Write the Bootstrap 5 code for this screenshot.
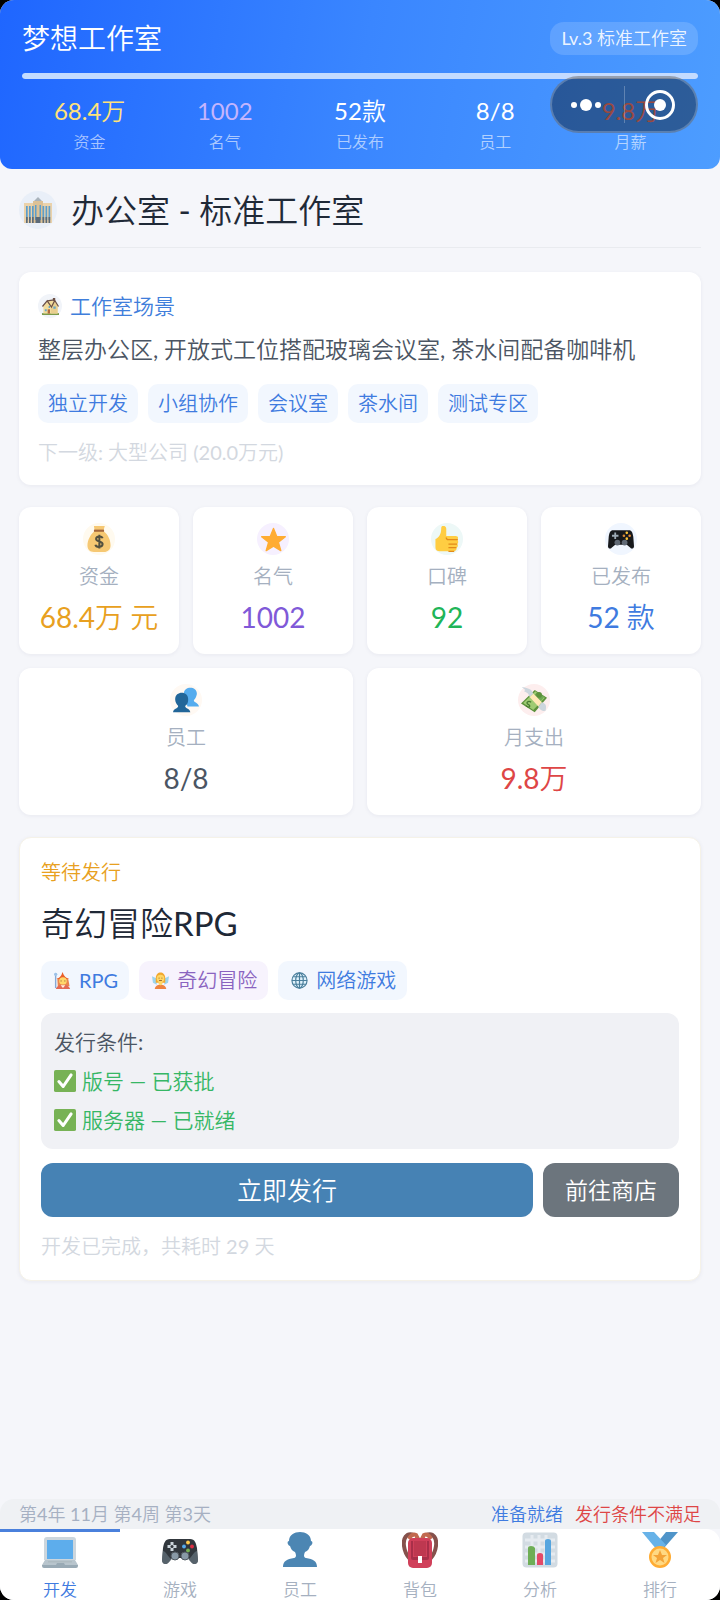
<!DOCTYPE html>
<html lang="zh-CN" class="h-100">
<head>
<meta charset="utf-8">
<meta name="viewport" content="width=device-width, initial-scale=1">
<title>梦想工作室</title>
<link href="https://cdn.jsdelivr.net/npm/bootstrap@5.3.0/dist/css/bootstrap.min.css" rel="stylesheet">
<style>
body{background:#000;font-family:Lato,"Noto Sans CJK SC DemiLight","Noto Sans CJK SC",sans-serif;font-weight:400;font-size:20px;line-height:26px;color:#1f2937}
.app{background:#f5f6fa;border-radius:14px}
svg{display:block}
a{text-decoration:none}
.hero{background:linear-gradient(100deg,#1f66ff,#3a86ff 50%,#4d9dff);border-radius:0 0 12px 12px;padding:22px 22px 16px;color:#fff}
.studio{font-size:28px;line-height:33px}
.level{background:rgba(255,255,255,.15);border-radius:14px;font-size:18px;line-height:33px;padding:0 11px;color:rgba(255,255,255,.9)}
.hero .progress{height:6px;margin:18px 0;background:rgba(255,255,255,.2);border-radius:3px}
.hero .progress-bar{background:#c3dbff;border-radius:3px}
.num{font-size:24px;line-height:28px}
.cap{font-size:16px;line-height:22px;margin-top:6px;color:rgba(255,255,255,.6)}
.gold{color:#ffe27a}.lilac{color:#c4b5fd}.rose{color:#ff7b6b}
.capsule{top:76px;right:22px;width:148px;height:57px;border-radius:29px;background:rgba(0,0,0,.4);border:2px solid rgba(255,255,255,.22)}
.capsule button{background:none;border:0;padding:0;height:100%}
.capsule button+button{position:relative}
.capsule button+button::before{content:"";position:absolute;left:0;top:8px;bottom:8px;width:1px;background:rgba(255,255,255,.25)}
main{padding:22px 19px}
.pagehead{padding-bottom:18px;border-bottom:1px solid #e9ebef;margin-bottom:24px;gap:14px}
.pagehead h1{font-size:33px;line-height:38px;font-weight:400;margin:0}
.disc{border-radius:50%;display:flex;align-items:center;justify-content:center;flex:none}
.d38{width:38px;height:38px;background:#e9eff8}
.d24{width:24px;height:24px;background:#f1f4f9}
.d32{width:32px;height:32px}
.panel{background:#fff;border-radius:12px;box-shadow:0 1px 4px rgba(30,40,80,.06)}
.scene{padding:22px 19px 20px}
.scene h2{font-size:21px;line-height:24px;font-weight:400;margin:0;color:#3f7edb}
.desc{font-size:23px;line-height:34px;margin:14px 0 18px;color:#4b5563}
.pills{gap:10px}
.pill{background:#f2f7fe;color:#3f7be0;border-radius:10px;line-height:39px;padding:0 10px}
.pill.ic{padding:0 11px 0 13px;display:flex;align-items:center;gap:8px}
.pill.violet{background:#f7f3fd;color:#8a63c0}
.faint{color:#d3d8e0;margin-top:16px}
.tiles{display:grid;grid-template-columns:repeat(4,1fr);gap:14px;margin:22px 0}
.tile{padding:16px 4px 19px;display:flex;flex-direction:column;align-items:center}
.wide{grid-column:span 2}
.tlabel{line-height:28px;margin-top:7px;color:#a5b0c0}
.tvalue{font-size:28px;line-height:36px;margin-top:9px}
.project{border:1px solid #f5f2e8;padding:21px}
.project h2{font-size:33px;line-height:44px;font-weight:400;margin:16px 0}
.amber{color:#e8a020}
.conds{background:#f0f1f5;border-radius:12px;padding:9px 13px 10px;margin:13px 0 14px;font-size:21px;line-height:39px;color:#4b5563}
.ok{color:#36b765;gap:6px}
.act{height:54px;border:0;border-radius:12px;color:#fff;padding:0 20px}
.go{background:#4682b4;font-size:25px}
.shop{background:#6c757d;font-size:23px;width:136px;white-space:nowrap}
.status{background:#eff1f4;border-radius:14px 14px 0 0;padding:1px 19px 0;font-size:18px;line-height:29px;color:#a6b0c2}
.tabs{background:#fff;border-radius:0 14px 0 0}
.tabs a{flex:1 1 0;border-top:3px solid transparent;display:flex;flex-direction:column;align-items:center;font-size:17px;line-height:20px;color:#a5b0c0;gap:12px}
.tabs a.on{border-color:#4a80dc;color:#3f7be0}
</style>
<script src="https://cdn.jsdelivr.net/npm/bootstrap@5.3.0/dist/js/bootstrap.bundle.min.js"></script>
</head>
<body class="h-100">
<div class="app d-flex flex-column min-vh-100 position-relative overflow-hidden">
<header class="hero">
  <div class="d-flex justify-content-between">
    <div class="studio">梦想工作室</div>
    <div class="level">Lv.3 标准工作室</div>
  </div>
  <div class="progress" role="progressbar" aria-label="等级进度" aria-valuenow="100" aria-valuemin="0" aria-valuemax="100"><div class="progress-bar w-100"></div></div>
  <div class="row g-0 text-center">
    <div class="col"><div class="num gold">68.4万</div><div class="cap">资金</div></div>
    <div class="col"><div class="num lilac">1002</div><div class="cap">名气</div></div>
    <div class="col"><div class="num">52款</div><div class="cap">已发布</div></div>
    <div class="col"><div class="num">8/8</div><div class="cap">员工</div></div>
    <div class="col"><div class="num rose">9.8万</div><div class="cap">月薪</div></div>
  </div>
</header>
<div class="capsule position-absolute d-flex">
  <button class="w-50" type="button" aria-label="更多"><svg class="mx-auto" width="34" height="14" viewBox="0 0 34 14" fill="#fff"><circle cx="3" cy="7" r="3"/><circle cx="15" cy="7" r="6"/><circle cx="27" cy="7" r="3"/></svg></button>
  <button class="w-50" type="button" aria-label="关闭"><svg class="mx-auto" width="32" height="32" viewBox="0 0 32 32"><circle cx="16" cy="16" r="13.5" fill="none" stroke="#fff" stroke-width="3"/><circle cx="16" cy="16" r="6" fill="#fff"/></svg></button>
</div>

<main class="flex-grow-1">
  <div class="pagehead d-flex align-items-center">
    <span class="disc d38"><svg width="28" height="28" viewBox="0 0 28 28"><path fill="#a9b3bb" d="M10 5l4-4 4 4v3h-8z"/><path fill="#ead2ab" d="M0 7h28v20H0z"/><path fill="#dcc196" d="M9 5h10v22H9z"/><path fill="#5c9ecb" d="M2 10h1.700v14H2zM5 10h1.700v14H5zM8 10h1.700v14H8zM11 9h1.500v15H11zM15.500 9H17v15h-1.500zM18.500 10h1.700v14h-1.700zM21.500 10h1.700v14h-1.700zM24.500 10h1.700v14h-1.700z"/><path fill="#5b6a78" d="M2 21h1.700v6H2zM5 21h1.700v6H5zM8 21h1.700v6H8zM11.500 21h5v6h-5zM18.500 21h1.700v6h-1.700zM21.500 21h1.700v6h-1.700zM24.500 21h1.700v6h-1.700z"/></svg></span>
    <h1>办公室 - 标准工作室</h1>
  </div>

  <section class="panel scene">
    <div class="d-flex align-items-center gap-2">
      <span class="disc d24"><svg width="17" height="17" viewBox="0 0 36 36"><path fill="#7c9b4b" d="M0 32h36v4H0z"/><path fill="#f2dc9c" d="M3 18L12 7l15-2 6 12v16H3z"/><path fill="#e9cf8f" d="M19 17L27 6l6 11v16H19z"/><path fill="none" stroke="#6b4f45" stroke-width="2.500" d="M1 18L11 6l9 13 7-14 8 13M11 6l15-2"/><path fill="#6b4f45" d="M23 0h5v6h-5z"/><path fill="#66a6c5" d="M24 18h5v5h-5zM6 24h4v4H6zM14 17h3v4h-3z"/><path fill="#b06a3d" d="M12 24h5v9h-5z"/></svg></span>
      <h2>工作室场景</h2>
    </div>
    <p class="desc">整层办公区, 开放式工位搭配玻璃会议室, 茶水间配备咖啡机</p>
    <div class="pills d-flex flex-wrap">
      <span class="pill">独立开发</span><span class="pill">小组协作</span><span class="pill">会议室</span><span class="pill">茶水间</span><span class="pill">测试专区</span>
    </div>
    <div class="faint">下一级: 大型公司 (20.0万元)</div>
  </section>

  <section class="tiles">
    <div class="panel tile"><span class="disc d32" style="background:#fffaef"><svg width="26" height="26" viewBox="0 0 36 36"><path fill="#f6c873" d="M11 0h15l-2 7c7 5 10 13 10 20 0 6-4 9-9 9H11c-6 0-9-4-9-9 0-7 4-15 10-20z"/><path fill="#a4663b" d="M11 5h14v3H11z"/><path d="M23 17c-1-3-9-4-9 1 0 4 9 3 9 7 0 5-9 5-10 1M18.500 12v19" fill="none" stroke="#53503f" stroke-width="2.800"/></svg></span><div class="tlabel">资金</div><div class="tvalue amber">68.4万 元</div></div>
    <div class="panel tile"><span class="disc d32" style="background:#f6f0ff"><svg width="25" height="25" viewBox="0 0 36 36"><path fill="#ffac33" stroke="#ffac33" stroke-width="2" stroke-linejoin="round" d="M18 2l4.500 11.500L35 14l-10 8 3.500 12L18 27.500 7.500 34 11 22 1 14l12.500-.5z"/></svg></span><div class="tlabel">名气</div><div class="tvalue" style="color:#8059d8">1002</div></div>
    <div class="panel tile"><span class="disc d32" style="background:#edf8f7"><svg width="26" height="26" viewBox="0 0 36 36"><path fill="#ffcd42" d="M2 18c5-2 8-7 8-15 0-5 7-4 7 1v10h13c4 0 4 4 2 5 2 1 2 5 0 6 2 1 1 5-1 5 1 3-1 5-4 5H9c-5 0-7-2-7-6z"/><path d="M33 19H20c-2 0-3-1-3-3M32 25H20M31 30H20M28 35h-8" fill="none" stroke="#e28b1a" stroke-width="1.800"/></svg></span><div class="tlabel">口碑</div><div class="tvalue" style="color:#20b558">92</div></div>
    <div class="panel tile"><span class="disc d32" style="background:#f0f6ff"><svg width="26" height="26" viewBox="0 0 36 36"><path fill="#17191c" d="M7 6h22c4 0 5 3 6 9l1 13c0 4-4 4-5 2l-5-4H10l-5 4c-1 2-5 2-5-2l1-13c1-6 2-9 6-9z"/><path d="M10 9v9M5.500 13.500h9" stroke="#9daab5" stroke-width="2.500"/><circle cx="26" cy="9.500" r="1.800" fill="#ffc536"/><circle cx="30" cy="13.500" r="1.800" fill="#e98c35"/><circle cx="22" cy="13.500" r="1.800" fill="#da8c36"/><circle cx="26" cy="17.500" r="1.800" fill="#ffc536"/><circle cx="13" cy="23" r="4" fill="#606975"/><circle cx="23" cy="23" r="4" fill="#606975"/></svg></span><div class="tlabel">已发布</div><div class="tvalue" style="color:#3f7be0">52 款</div></div>
    <div class="panel tile wide"><span class="disc d32" style="background:#fff9f3"><svg width="26" height="26" viewBox="0 0 36 36"><path fill="#55acee" d="M15 9c0-11 19-11 18 1-1 4-2 6-4 8-1 4 6 3 7 9H20z"/><path fill="#226699" d="M3 17C3 5 22 5 21 18c0 4-2 7-4 8-1 4 6 3 7 9H0c1-6 8-5 7-9-2-2-4-5-4-9z"/></svg></span><div class="tlabel">员工</div><div class="tvalue" style="color:#4b5563">8/8</div></div>
    <div class="panel tile wide"><span class="disc d32" style="background:#fdeeee"><svg width="26" height="26" viewBox="0 0 36 36"><path fill="#5c913b" d="M0 23L19 4l17 11-17 20z"/><path fill="#9fcb72" d="M3 22L20 6l13 9-16 17z"/><path fill="#6fa851" d="M17 12l6-5 9 7-5 6z"/><circle cx="25" cy="11" r="4" fill="#5c913b"/><path d="M14 21c-4-3-8 1-4 3s2 6-3 2" fill="none" stroke="#477a31" stroke-width="1.800"/><path fill="#ffe8b6" d="M12 14l5-5 12 12-5 6z"/><path fill="#ccd6dd" d="M1 0c6 1 10 2 13 4l3 5-5 5c-1-5-5-7-8-8l2-2zM29 21c5 2 7 4 5 12-4 1-9-2-10-6z"/></svg></span><div class="tlabel">月支出</div><div class="tvalue" style="color:#de4646">9.8万</div></div>
  </section>

  <section class="panel project">
    <div class="amber">等待发行</div>
    <h2>奇幻冒险RPG</h2>
    <div class="pills d-flex flex-wrap">
      <span class="pill ic"><svg width="17" height="17" viewBox="0 0 36 36"><path fill="#e9854d" d="M7 14h23l3 16H8z"/><path fill="#e95f28" d="M5 15q10-3 13-15 4 12 14 15z"/><circle cx="19" cy="19" r="8" fill="#ffd76a"/><path fill="#e36a55" d="M4 36c2-12 28-12 30 0z"/><path fill="#fff3df" d="M14 28h10l-5 6z"/><path fill="#87a9d6" d="M2 2h3v32H2z"/><circle cx="3.500" cy="5" r="3.500" fill="#9cc2e8"/><path d="M15 18v2M23 18v2" stroke="#7a4b27" stroke-width="2"/></svg>RPG</span>
      <span class="pill ic violet"><svg width="17" height="17" viewBox="0 0 36 36"><path fill="#9cd4ee" d="M0 9l10 5v13L2 23zM36 9l-10 5v13l8-4z"/><path fill="#f2a82e" d="M8 13C8-3 28-3 28 13v10H8z"/><circle cx="18" cy="14" r="8" fill="#ffd766"/><path fill="#ee8240" d="M6 36c0-12 24-12 24 0z"/><path fill="#ffd766" d="M14 20h8v6q-4 4-8 0z"/><path d="M15 12v2M21 12v2M15 18h6" stroke="#9a6327" stroke-width="2"/></svg>奇幻冒险</span>
      <span class="pill ic"><svg width="17" height="17" viewBox="0 0 36 36"><g fill="#dff1fb" stroke="#4a7f9c" stroke-width="2.500"><circle cx="18" cy="18" r="16"/><ellipse cx="18" cy="18" rx="8" ry="16"/><path d="M18 2v32M2 18h32M5 10h26M5 26h26"/></g></svg>网络游戏</span>
    </div>
    <div class="conds">
      <div>发行条件:</div>
      <div class="ok d-flex align-items-center"><svg width="22" height="22" viewBox="0 0 36 36"><rect width="36" height="36" rx="3" fill="#77b255"/><path d="M8 19l7 8L28 8" fill="none" stroke="#fff" stroke-width="5" stroke-linecap="round" stroke-linejoin="round"/></svg>版号 — 已获批</div>
      <div class="ok d-flex align-items-center"><svg width="22" height="22" viewBox="0 0 36 36"><rect width="36" height="36" rx="3" fill="#77b255"/><path d="M8 19l7 8L28 8" fill="none" stroke="#fff" stroke-width="5" stroke-linecap="round" stroke-linejoin="round"/></svg>服务器 — 已就绪</div>
    </div>
    <div class="d-flex" style="gap:10px">
      <button type="button" class="act go flex-grow-1">立即发行</button>
      <button type="button" class="act shop">前往商店</button>
    </div>
    <div class="faint">开发已完成，共耗时 29 天</div>
  </section>
</main>

<footer>
  <div class="status d-flex justify-content-between"><span>第4年 11月 第4周 第3天</span><span class="d-flex" style="gap:12px"><span style="color:#3f7be0">准备就绪</span><span style="color:#de4646">发行条件不满足</span></span></div>
  <nav class="tabs d-flex">
    <a href="#" class="on" aria-current="page"><svg width="36" height="36" viewBox="0 0 36 36"><path fill="#ccd6dd" d="M5 5h26a3 3 0 013 3v20H2V8a3 3 0 013-3z"/><path fill="#5dadec" d="M5 8h26v19H5z"/><path fill="#b8c5cd" d="M3 28h30l3 5H0z"/><path fill="#99aab5" d="M0 33h36v1q0 2-2 2H2q-2 0-2-2zM15 31h7l1 2h-9z"/><path fill="#aebbc1" d="M6 29h24v1.500H6z"/></svg>开发</a>
    <a href="#"><svg width="36" height="36" viewBox="0 0 36 36"><path fill="#31373d" d="M8 7h20c5 0 6 4 7 9l1 12c0 5-5 5-7 2l-3-4H10l-3 4c-2 3-7 3-7-2l1-12c1-5 2-9 7-9z"/><path fill="#66757f" d="M1 19c4 1 5 7 9 8l-3 3c-2 3-7 3-7-2zM35 19c-4 1-5 7-9 8l3 3c2 3 7 3 7-2z" opacity=".7"/><path d="M10 10v9M5.500 14.500h9" stroke="#ccd6dd" stroke-width="3"/><circle cx="10" cy="14.500" r="1.500" fill="#31373d"/><circle cx="26" cy="10.500" r="1.900" fill="#ffcc4d"/><circle cx="30" cy="14.500" r="1.900" fill="#dd2e44"/><circle cx="22" cy="14.500" r="1.900" fill="#55acee"/><circle cx="26" cy="18.500" r="1.900" fill="#77b255"/><circle cx="13" cy="24" r="4" fill="#8899a6" stroke="#50585f"/><circle cx="23" cy="24" r="4" fill="#8899a6" stroke="#50585f"/></svg>游戏</a>
    <a href="#"><svg width="36" height="36" viewBox="0 0 36 36"><path fill="#4c86b3" d="M1 35c0-6 4-8 11-9 3-1 2-4 1-6-3-1-4-3-5-6-3-1-3-5-1-5C7-3 29-3 29 9c2 0 2 4-1 5-1 3-2 5-5 6-1 2-2 5 1 6 7 1 11 3 11 9z"/></svg>员工</a>
    <a href="#"><svg width="36" height="36" viewBox="0 0 36 36"><path d="M12 3C4 0 1 7 2 14q1 8 6 13M24 3c8-3 11 4 10 11q-1 8-6 13" fill="none" stroke="#85514c" stroke-width="4"/><path d="M7 7q3-6 7-4l2 4M29 7q-3-6-7-4l-2 4" fill="none" stroke="#c1694f" stroke-width="4"/><rect x="6" y="6" width="24" height="30" rx="5" fill="#d0405a"/><path fill="#a82f49" d="M9 9h2v16h14V9h2v17q0 2-2 2H11q-2 0-2-2z"/><path fill="#be3850" d="M12 9h12v15H12z"/><path fill="#fff" d="M16 24h4v7h-4z"/></svg>背包</a>
    <a href="#"><svg width="36" height="36" viewBox="0 0 36 36"><rect x=".5" y=".5" width="35" height="35" rx="4" fill="#d2dbe2"/><path d="M3 8h30M3 15h30M3 22h30M3 29h30M10 3v30M17 3v30M24 3v30" stroke="#e6ebf0" stroke-width="3"/><path d="M6 33V16q0-2 3-2t4 2v17z" fill="#6eae56"/><path d="M15 33V23q0-2 3-2t3 2v10z" fill="#e34a68"/><path d="M23 33V9q0-2 3-2t3 2v24z" fill="#55a5df"/></svg>分析</a>
    <a href="#"><svg width="36" height="36" viewBox="0 0 36 36"><path fill="#4f94c9" d="M24 0h12L22 16l-7-5z"/><path fill="#67b2e8" d="M0 0h12l12 13-5 5h-4z"/><circle cx="18" cy="25" r="11" fill="#ffac33"/><circle cx="18" cy="25" r="8.500" fill="#ffd983"/><path fill="#f3a338" d="M18 18l2 5h5l-4 3 1.500 5-4.500-3-4.500 3 1.500-5-4-3h5z"/></svg>排行</a>
  </nav>
</footer>
</div>
</body>
</html>
